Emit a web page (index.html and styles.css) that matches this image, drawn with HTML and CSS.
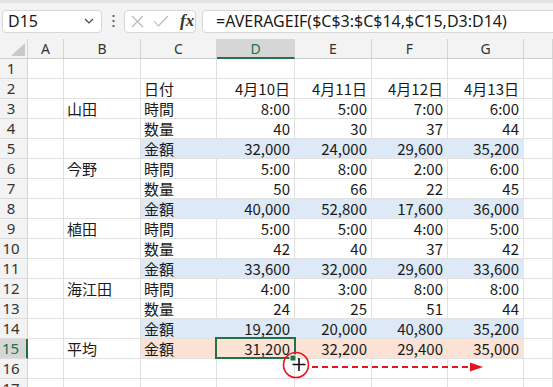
FILE: index.html
```html
<!DOCTYPE html>
<html>
  <head>
    <meta charset="utf-8">
    <link rel="stylesheet" href="styles.css">
  </head>
  <body>
    <div class="screen">
      <div class="toolbar">
        <div class="namebox">
          <span>D15</span>
          <svg class="chev" width="10" height="6" viewBox="0 0 10 6"><path d="M1 1 L5 5 L9 1" fill="none" stroke="#444" stroke-width="1.2"/></svg>
        </div>
        <div class="kebab">
          <svg width="3" height="12" viewBox="0 0 3 12"><rect x="0.5" y="0" width="2" height="2" fill="#666"/><rect x="0.5" y="5" width="2" height="2" fill="#666"/><rect x="0.5" y="10" width="2" height="2" fill="#666"/></svg>
        </div>
        <div class="fxbox">
          <svg class="xmark" width="13" height="13" viewBox="0 0 13 13"><path d="M1 1 L12 12 M12 1 L1 12" stroke="#b8b8b8" stroke-width="1.1" fill="none"/></svg>
          <svg class="check" width="16" height="12" viewBox="0 0 16 12"><path d="M1 6 L5.5 11 L15 1" stroke="#b8b8b8" stroke-width="1.1" fill="none"/></svg>
          <span class="fx">fx</span>
        </div>
        <div class="formula">=AVERAGEIF($C$3:$C$14,$C15,D3:D14)</div>
      </div>

      <div class="sheet">
        <div class="row head">
          <div class="corner"><svg width="14" height="13" viewBox="0 0 14 13"><path d="M14 0 L14 13 L0 13 Z" fill="#c9c9c9"/></svg></div>
          <div>A</div><div>B</div><div>C</div><div class="sel">D</div><div>E</div><div>F</div><div>G</div><div></div>
        </div>
        <div class="row"><div class="rh">1</div><div></div><div></div><div></div><div></div><div></div><div></div><div></div><div></div></div>
        <div class="row"><div class="rh">2</div><div></div><div></div><div>日付</div><div class="n">4月10日</div><div class="n">4月11日</div><div class="n">4月12日</div><div class="n">4月13日</div><div></div></div>
        <div class="row"><div class="rh">3</div><div></div><div>山田</div><div>時間</div><div class="n">8:00</div><div class="n">5:00</div><div class="n">7:00</div><div class="n">6:00</div><div></div></div>
        <div class="row"><div class="rh">4</div><div></div><div></div><div>数量</div><div class="n">40</div><div class="n">30</div><div class="n">37</div><div class="n">44</div><div></div></div>
        <div class="row"><div class="rh">5</div><div></div><div></div><div class="blue">金額</div><div class="n blue">32,000</div><div class="n blue">24,000</div><div class="n blue">29,600</div><div class="n blue">35,200</div><div></div></div>
        <div class="row"><div class="rh">6</div><div></div><div>今野</div><div>時間</div><div class="n">5:00</div><div class="n">8:00</div><div class="n">2:00</div><div class="n">6:00</div><div></div></div>
        <div class="row"><div class="rh">7</div><div></div><div></div><div>数量</div><div class="n">50</div><div class="n">66</div><div class="n">22</div><div class="n">45</div><div></div></div>
        <div class="row"><div class="rh">8</div><div></div><div></div><div class="blue">金額</div><div class="n blue">40,000</div><div class="n blue">52,800</div><div class="n blue">17,600</div><div class="n blue">36,000</div><div></div></div>
        <div class="row"><div class="rh">9</div><div></div><div>植田</div><div>時間</div><div class="n">5:00</div><div class="n">5:00</div><div class="n">4:00</div><div class="n">5:00</div><div></div></div>
        <div class="row"><div class="rh">10</div><div></div><div></div><div>数量</div><div class="n">42</div><div class="n">40</div><div class="n">37</div><div class="n">42</div><div></div></div>
        <div class="row"><div class="rh">11</div><div></div><div></div><div class="blue">金額</div><div class="n blue">33,600</div><div class="n blue">32,000</div><div class="n blue">29,600</div><div class="n blue">33,600</div><div></div></div>
        <div class="row"><div class="rh">12</div><div></div><div>海江田</div><div>時間</div><div class="n">4:00</div><div class="n">3:00</div><div class="n">8:00</div><div class="n">8:00</div><div></div></div>
        <div class="row"><div class="rh">13</div><div></div><div></div><div>数量</div><div class="n">24</div><div class="n">25</div><div class="n">51</div><div class="n">44</div><div></div></div>
        <div class="row"><div class="rh">14</div><div></div><div></div><div class="blue">金額</div><div class="n blue">19,200</div><div class="n blue">20,000</div><div class="n blue">40,800</div><div class="n blue">35,200</div><div></div></div>
        <div class="row"><div class="rh sel">15</div><div></div><div>平均</div><div class="peach">金額</div><div class="n peach">31,200</div><div class="n peach">32,200</div><div class="n peach">29,400</div><div class="n peach">35,000</div><div></div></div>
        <div class="row"><div class="rh">16</div><div></div><div></div><div></div><div></div><div></div><div></div><div></div><div></div></div>
        <div class="row"><div class="rh">17</div><div></div><div></div><div></div><div></div><div></div><div></div><div></div><div></div></div>
      </div>

      <!-- selection, fill handle and drag hint -->
      <div class="selbox"></div>
      <svg class="overlay" width="553" height="387" viewBox="0 0 553 387">
        <rect x="290" y="355" width="6" height="6" fill="#217346" stroke="#fff" stroke-width="1"/>
        <circle cx="296" cy="365" r="12.5" fill="none" stroke="#e8141e" stroke-width="1.6"/>
        <path d="M299 358 V371 M292.5 364.5 H305.5" stroke="#111" stroke-width="1.6"/>
        <path d="M312 367 H472" stroke="#e8141e" stroke-width="1.8" stroke-dasharray="6 4"/>
        <path d="M470 362.5 L483 367 L470 371.5 Z" fill="#e8141e"/>
      </svg>
    </div>
  </body>
</html>
```

FILE: styles.css
```css
body {margin: 0; background: #fff}
.screen {position: relative; width: 553px; height: 387px; overflow: hidden; font-family: "Noto Sans", sans-serif; color: #1a1a1a}

.toolbar {display: flex; align-items: center; height: 36px; border-top: 3px solid #e4e4e4; background: #f3f3f3; padding-left: 2px}
.namebox {display: flex; align-items: center; justify-content: space-between; box-sizing: border-box; width: 100px; height: 23px; padding: 0 5px 0 5px; background: #fff; border: 1px solid #d6d6d6; border-radius: 4px; font-size: 16px}
.namebox .chev {margin-right: 2px}
.kebab {display: flex; justify-content: center; width: 22px}
.fxbox {display: flex; align-items: center; box-sizing: border-box; width: 72px; height: 23px; padding-left: 6px; background: #fff; border: 1px solid #d6d6d6; border-radius: 4px}
.fxbox .check {margin-left: 9px}
.fx {margin-left: 11px; font-family: "Liberation Serif", serif; font-style: italic; font-weight: bold; font-size: 17px; color: #333; line-height: 20px}
.formula {flex: 1; box-sizing: border-box; height: 23px; margin-left: 6px; margin-right: -6px; padding-left: 13px; background: #fff; border: 1px solid #d6d6d6; border-radius: 4px; font-size: 16px; line-height: 21px; white-space: nowrap}

.row {display: grid; grid-template-columns: 28px 36px 77px 76px 78px 77px 76px 76px 1fr; height: 20px}
.row > div {box-sizing: border-box; border-right: 1px solid #e1e1e1; border-bottom: 1px solid #e1e1e1; padding: 0 3px; line-height: 19px; font-family: "Noto Sans CJK JP", sans-serif; font-size: 15px; white-space: nowrap; overflow: hidden}
.row > .n {text-align: right; padding-right: 4px}
.row > .blue {background: #dde9f6; border-right-color: #dde9f6}
.row > .peach {background: #fbe2d5; border-right-color: #fbe2d5}

.row.head > div {background: #f3f3f3; border-right-color: #d4d4d4; border-bottom-color: #cfcfcf; text-align: center; font-family: "Noto Sans", sans-serif; font-size: 14px; color: #333}
.row.head > .corner {display: flex; align-items: flex-end; justify-content: flex-end; padding: 0 2px 2px 0}
.row.head > .sel {background: #d6d6d6; color: #217346; border-bottom: 2px solid #217346}
.row > .rh {background: #f3f3f3; border-right-color: #d4d4d4; border-bottom-color: #dcdcdc; text-align: center; padding: 0 5px 0 0; font-family: "Noto Sans", sans-serif; font-size: 15px; color: #333}
.row > .rh.sel {background: #d6d6d6; color: #217346; border-right: 2px solid #217346}

.selbox {position: absolute; left: 215px; top: 337px; width: 81px; height: 22px; box-sizing: border-box; border: 2px solid #217346}
.overlay {position: absolute; left: 0; top: 0}
```
